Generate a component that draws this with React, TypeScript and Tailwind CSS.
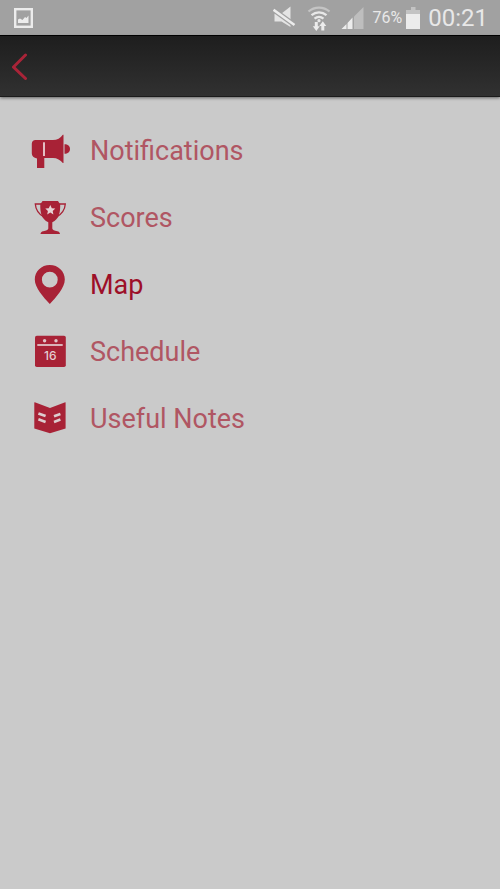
import React, { useState } from "react";

const MegaphoneIcon = () => (
  <svg viewBox="0 0 40 40" className="w-10 h-10" fill="currentColor" aria-hidden="true">
    <path d="M5.500 9H23c4 0 7.500-2 9.800-5.300h.7V32h-.7C30.500 29 27 27 23 27h-8.700v10H7V27.500C3.800 27 1.800 25 1.800 22.500v-9.800C1.800 10.500 3.300 9 5.500 9z" />
    <path d="M34.500 13.200c3.300 0 5.500 1.800 5.500 4.700s-2.200 4.800-5.500 4.800z" />
    <rect x="13" y="11.300" width="2" height="13.700" fill="#e3bfc3" />
  </svg>
);

const TrophyIcon = () => (
  <svg viewBox="0 0 40 40" className="w-10 h-10" fill="currentColor" aria-hidden="true">
    <path d="M12.500 3h15.500c.8 1.500 1.500 2.300 2.200 2.700.2 9-1.200 15.500-7.900 18.500v6.300c.3 1.500 2 2.200 5 2.800 1.700.3 2.500 1.200 2.700 2.700H10.500c.2-1.500 1-2.400 2.700-2.700 3-.6 4.800-1.300 5.100-2.800v-6.300c-6.700-3-8.300-9.500-8-18.500.7-.4 1.400-1.200 2.200-2.700z" />
    <path d="M11 6H5.300c.4 6.500 3.700 10.500 9.200 13.500M29.500 6h5.800c-.4 6.500-3.800 10.500-9.400 13.500" fill="none" stroke="currentColor" strokeWidth="1.300" />
    <path d="M20.300 7l1.500 3.200 3.500.4-2.600 2.300.7 3.500-3.100-1.800-3.100 1.800.7-3.500-2.600-2.300 3.500-.4z" fill="#e6d3d5" />
  </svg>
);

const PinIcon = () => (
  <svg viewBox="0 0 40 40" className="w-10 h-10" fill="currentColor" aria-hidden="true">
    <path fillRule="evenodd" d="M19.800 0C28.200 0 34.800 6.300 34.800 14.500c0 8.300-8.500 17.500-15 24.500-6.500-7-15-16.200-15-24.500C4.800 6.300 11.400 0 19.800 0zm0 6.800a7.900 7.900 0 1 0 0 15.800 7.900 7.900 0 0 0 0-15.800z" />
  </svg>
);

const CalendarIcon = () => (
  <svg viewBox="0 0 40 40" className="w-10 h-10" aria-hidden="true">
    <rect x="5" y="3.700" width="30.800" height="31.300" rx="1.800" fill="currentColor" />
    <circle cx="14.600" cy="8.700" r="1.700" fill="#dfc5c8" />
    <circle cx="26" cy="8.700" r="1.700" fill="#dfc5c8" />
    <path d="M7.300 13h25.400" stroke="#dfc5c8" strokeWidth="1.800" />
    <text x="20.200" y="27.500" textAnchor="middle" fontSize="12" fill="#e3cfd1" className="font-['Inter',sans-serif] font-medium">
      16
    </text>
  </svg>
);

const BookIcon = () => (
  <svg viewBox="0 0 40 40" className="w-10 h-10" aria-hidden="true">
    <path d="M4.800 3.200L20 9l15.200-5.800.4.300v26L20 34.200 4.300 29.500v-26z" fill="currentColor" />
    <path d="M8.400 14.400l7.200 2.700M8.400 20.200l7.200 2.700M30.400 14.900L24 17.200M30.400 20.600L24 22.900" stroke="#dccdcf" strokeWidth="2.700" />
  </svg>
);

const PictureIcon = () => (
  <svg viewBox="0 0 20 20" className="w-5 h-5" aria-hidden="true">
    <rect x="1.200" y="1.200" width="16.600" height="17.600" fill="none" stroke="#ececec" strokeWidth="2.400" />
    <path d="M4 15v-3.500l2-1 2.500 1.500 2.500-3 1.500 1L14.500 7.500V15z" fill="#ececec" />
  </svg>
);

const MuteIcon = () => (
  <svg viewBox="0 0 24 24" className="w-6 h-6" aria-hidden="true">
    <path d="M1.500 7.500h7L17.500.5v20.500L8.500 15.500h-7z" fill="#e4e4e4" />
    <path d="M.5 3.700L21.500 19" stroke="#a1a1a1" strokeWidth="5" />
    <path d="M.5 3.700L21.500 19" stroke="#ececec" strokeWidth="2.600" />
  </svg>
);

const WifiIcon = () => (
  <svg viewBox="0 0 24 26" className="w-6 h-[26px]" fill="none" aria-hidden="true">
    <path d="M1.500 6.500c6-5.300 15-5.300 21 0" stroke="#c4c4c4" strokeWidth="2.300" />
    <path d="M4.500 10.200c4.400-3.800 10.600-3.800 15 0M7.500 13.700c2.700-2.200 6.300-2.200 9 0" stroke="#e8e8e8" strokeWidth="2.200" />
    <circle cx="12" cy="15.700" r="1.600" fill="#e8e8e8" />
    <path d="M7.800 17h3v4.300h2L9.300 26 5.800 21.300h2zM14.300 25.500v-4.500h-2l3.500-4.700 3.500 4.700h-2v4.500z" fill="#ececec" />
  </svg>
);

const SignalIcon = () => (
  <svg viewBox="0 0 24 24" className="w-6 h-6" aria-hidden="true">
    <path d="M13 10.500L22.500 1v22H13z" fill="#bebebe" />
    <path d="M.5 23l5-5v5zM6.500 17l5-5.500V23h-5z" fill="#ececec" />
  </svg>
);

const BatteryIcon = () => (
  <svg viewBox="0 0 14 22" className="w-3.5 h-[22px]" aria-hidden="true">
    <path d="M5 0h4.500v3H14v5H0V3h5z" fill="#c3c3c3" />
    <path d="M0 7h14v15H0z" fill="#ececec" />
  </svg>
);

const menuItems = [
  { label: "Notifications", icon: MegaphoneIcon },
  { label: "Scores", icon: TrophyIcon },
  { label: "Map", icon: PinIcon },
  { label: "Schedule", icon: CalendarIcon },
  { label: "Useful Notes", icon: BookIcon },
];

const App = () => {
  const [active, setActive] = useState("Map");

  return (
    <div className="min-h-screen bg-[#cacaca] font-['Roboto',sans-serif]">
      <div className="flex items-center justify-between h-9 pl-[14px] pr-3 bg-[#a1a1a1] border-b border-black text-[#e8e8e8]">
        <PictureIcon />
        <div className="flex items-center">
          <MuteIcon />
          <div className="ml-2.5">
            <WifiIcon />
          </div>
          <div className="ml-2.5">
            <SignalIcon />
          </div>
          <span className="ml-2 text-[16px]">76%</span>
          <div className="ml-1">
            <BatteryIcon />
          </div>
          <span className="ml-2 text-[24px] leading-9">00:21</span>
        </div>
      </div>

      <header className="relative flex items-center h-[61px] bg-linear-to-b from-[#1e1e1e] to-[#313131] border-b border-[#1c1c1c] shadow-[0_1px_3px_rgba(0,0,0,0.5)]">
        <button type="button" aria-label="Back" className="flex items-center w-12 h-full pl-3 text-[#a92438]">
          <svg viewBox="0 0 16 28" className="w-4 h-7" fill="none" stroke="currentColor" strokeWidth="3" strokeLinecap="round" aria-hidden="true">
            <path d="M13.500 3L1.500 15l12 11.500" />
          </svg>
        </button>
      </header>

      <nav className="pt-5">
        <ul>
          {menuItems.map(({ label, icon: Icon }) => (
            <li key={label}>
              <a
                href="#"
                onClick={(e) => {
                  e.preventDefault();
                  setActive(label);
                }}
                aria-current={active === label ? "page" : undefined}
                className="flex items-center gap-5 h-[67px] pl-[30px] text-[#a82236]"
              >
                <Icon />
                <span className={`text-[27px] leading-9 ${active === label ? "text-[#9d0f28]" : "text-[#b05663]"}`}>{label}</span>
              </a>
            </li>
          ))}
        </ul>
      </nav>
    </div>
  );
};

export default App;
